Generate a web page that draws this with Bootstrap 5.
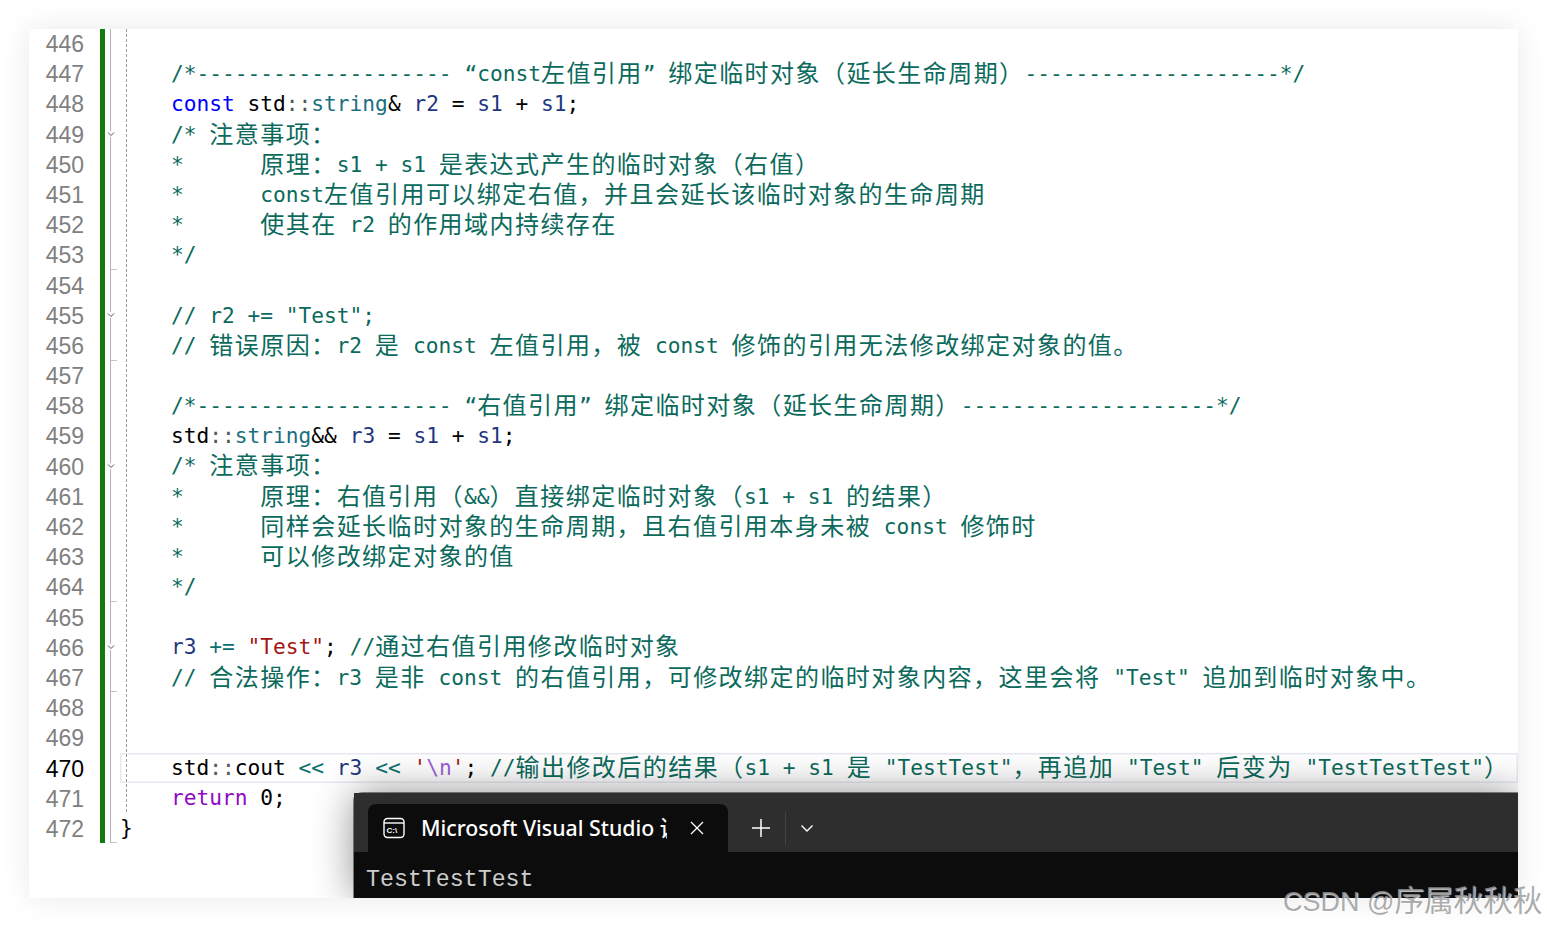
<!DOCTYPE html>
<html lang="zh">
<head>
<meta charset="utf-8">
<title>Code</title>
<link href="https://cdn.jsdelivr.net/npm/bootstrap@5.3.0/dist/css/bootstrap.min.css" rel="stylesheet">
<style>
body{background:#fff;overflow:hidden;height:928px}
.sheet{margin:29px 29px 0;height:869px;width:1489px;background:#fff;box-shadow:0 0 28px rgba(0,0,0,.09);position:relative;overflow:hidden}
.rowline{height:30.18px;line-height:30.18px;white-space:pre}
.nums{width:55px;text-align:right;font:23px/30.18px "Liberation Sans",sans-serif;color:#808080}
.nums .now{color:#000}
.gut{margin-left:16px;width:4.5px;background:#107c10;height:814px}
.fold{width:15.5px;height:814px}
.fm{height:30.15px;position:relative;border-left:1px solid #b4b4b4;margin-left:5px}
.fm svg{position:absolute;left:-4px;top:12px;background:#fff}
.fm.tick::after{content:"";position:absolute;left:0;bottom:0;width:6px;border-bottom:1px solid #c4c4c4}
.code{flex:1 1 auto;min-width:0;font-family:"DejaVu Sans Mono",monospace;font-size:21.2px;color:#000;position:relative}
.pad{padding-left:51px}
.now-line{box-shadow:inset 0 0 0 1.5px #e9e9f2}
.zh{font-family:"Noto Sans CJK SC",sans-serif;font-size:24px;letter-spacing:1.45px;line-height:0;vertical-align:-1px}
.cm{color:#0b6a5c}
.kw{color:#0000ff}
.ret{color:#8f08c4}
.va{color:#1f377f}
.ty{color:#1c6f80}
.op{color:#0a6f6f}
.st{color:#a31515}
.es{color:#9e5fd8}
.mu{color:#555}
.guide{position:absolute;left:6px;top:0;height:783px;border-left:1px dashed #9a9a9a}
.term{position:absolute;left:325px;top:764px;right:0;bottom:0;background:#0c0c0c;border-top-left-radius:8px;box-shadow:0 0 40px rgba(0,0,0,.45),0 0 0 1px #8f8f8f}
.tbar{height:59px;background:#2e2e2e;padding:11px 0 0 14px}
.ttab{width:360px;height:48px;background:#0c0c0c;border-radius:8px 8px 0 0;padding-left:15px;color:#fff}
.tname{width:246px;overflow:hidden;white-space:nowrap;font:500 21.3px/48px "Noto Sans","Noto Sans CJK SC",sans-serif;margin-left:16px}
.tsep{width:1px;height:33px;background:#444;margin:0 14px 0 14px}
.tout{padding:13px 0 0 12px;font:23.27px/30px "Liberation Mono",monospace;color:#ccc}
.wm{position:absolute;left:1283px;top:884px;font:27px/36px "Liberation Sans",sans-serif;color:rgba(150,150,150,.8);text-shadow:1px 1px 1px rgba(255,255,255,.8);white-space:nowrap}
.wmz{font-family:"Noto Sans CJK SC",sans-serif;font-size:29.6px;line-height:0}
</style>
</head>
<body>
<div class="sheet d-flex">
  <div class="nums">
    <div>446</div><div>447</div><div>448</div><div>449</div><div>450</div><div>451</div><div>452</div><div>453</div><div>454</div><div>455</div><div>456</div><div>457</div><div>458</div><div>459</div><div>460</div><div>461</div><div>462</div><div>463</div><div>464</div><div>465</div><div>466</div><div>467</div><div>468</div><div>469</div><div class="now">470</div><div>471</div><div>472</div>
  </div>
  <div class="gut"></div>
  <div class="fold">
    <div class="fm"></div><div class="fm"></div><div class="fm"></div>
    <div class="fm"><svg width="8" height="6" viewBox="0 0 8 6"><path d="M1 1.5 4 4.5 7 1.5" fill="none" stroke="#555" stroke-width="1"/></svg></div>
    <div class="fm"></div><div class="fm"></div><div class="fm"></div>
    <div class="fm tick"></div><div class="fm"></div>
    <div class="fm"><svg width="8" height="6" viewBox="0 0 8 6"><path d="M1 1.5 4 4.5 7 1.5" fill="none" stroke="#555" stroke-width="1"/></svg></div>
    <div class="fm tick"></div><div class="fm"></div><div class="fm"></div><div class="fm"></div>
    <div class="fm"><svg width="8" height="6" viewBox="0 0 8 6"><path d="M1 1.5 4 4.5 7 1.5" fill="none" stroke="#555" stroke-width="1"/></svg></div>
    <div class="fm"></div><div class="fm"></div><div class="fm"></div>
    <div class="fm tick"></div><div class="fm"></div>
    <div class="fm"><svg width="8" height="6" viewBox="0 0 8 6"><path d="M1 1.5 4 4.5 7 1.5" fill="none" stroke="#555" stroke-width="1"/></svg></div>
    <div class="fm tick"></div><div class="fm"></div><div class="fm"></div><div class="fm"></div><div class="fm"></div>
    <div class="fm tick"></div>
  </div>
  <div class="code">
    <div class="guide"></div>
    <div class="rowline pad"> </div>
    <div class="rowline pad cm">/*-------------------- “const<span class="zh">左值引用</span>” <span class="zh">绑定临时对象（延长生命周期）</span>--------------------*/</div>
    <div class="rowline pad"><span class="kw">const</span> std<span class="mu">::</span><span class="ty">string</span>&amp; <span class="va">r2</span> = <span class="va">s1</span> + <span class="va">s1</span>;</div>
    <div class="rowline pad cm">/* <span class="zh">注意事项：</span></div>
    <div class="rowline pad cm">*      <span class="zh">原理：</span>s1 + s1 <span class="zh">是表达式产生的临时对象（右值）</span></div>
    <div class="rowline pad cm">*      const<span class="zh">左值引用可以绑定右值，并且会延长该临时对象的生命周期</span></div>
    <div class="rowline pad cm">*      <span class="zh">使其在</span> r2 <span class="zh">的作用域内持续存在</span></div>
    <div class="rowline pad cm">*/</div>
    <div class="rowline pad"> </div>
    <div class="rowline pad cm">// r2 += "Test";</div>
    <div class="rowline pad cm">// <span class="zh">错误原因：</span>r2 <span class="zh">是</span> const <span class="zh">左值引用，被</span> const <span class="zh">修饰的引用无法修改绑定对象的值。</span></div>
    <div class="rowline pad"> </div>
    <div class="rowline pad cm">/*-------------------- “<span class="zh">右值引用</span>” <span class="zh">绑定临时对象（延长生命周期）</span>--------------------*/</div>
    <div class="rowline pad">std<span class="mu">::</span><span class="ty">string</span>&amp;&amp; <span class="va">r3</span> = <span class="va">s1</span> + <span class="va">s1</span>;</div>
    <div class="rowline pad cm">/* <span class="zh">注意事项：</span></div>
    <div class="rowline pad cm">*      <span class="zh">原理：右值引用（</span>&amp;&amp;<span class="zh">）直接绑定临时对象（</span>s1 + s1 <span class="zh">的结果）</span></div>
    <div class="rowline pad cm">*      <span class="zh">同样会延长临时对象的生命周期，且右值引用本身未被</span> const <span class="zh">修饰时</span></div>
    <div class="rowline pad cm">*      <span class="zh">可以修改绑定对象的值</span></div>
    <div class="rowline pad cm">*/</div>
    <div class="rowline pad"> </div>
    <div class="rowline pad"><span class="va">r3</span> <span class="op">+=</span> <span class="st">"Test"</span>; <span class="cm">//<span class="zh">通过右值引用修改临时对象</span></span></div>
    <div class="rowline pad cm">// <span class="zh">合法操作：</span>r3 <span class="zh">是非</span> const <span class="zh">的右值引用，可修改绑定的临时对象内容，这里会将</span> "Test" <span class="zh">追加到临时对象中。</span></div>
    <div class="rowline pad"> </div>
    <div class="rowline pad"> </div>
    <div class="rowline pad now-line">std<span class="mu">::</span>cout <span class="op">&lt;&lt;</span> <span class="va">r3</span> <span class="op">&lt;&lt;</span> <span class="st">'</span><span class="es">\n</span><span class="st">'</span>; <span class="cm">//<span class="zh">输出修改后的结果（</span>s1 + s1 <span class="zh">是</span> "TestTest"<span class="zh">，再追加</span> "Test" <span class="zh">后变为</span> "TestTestTest"<span class="zh">）</span></span></div>
    <div class="rowline pad"><span class="ret">return</span> 0;</div>
    <div class="rowline">}</div>
  </div>
  <div class="term">
    <div class="tbar d-flex align-items-start">
      <div class="ttab d-flex align-items-center">
        <svg width="22" height="22" viewBox="0 0 22 22" fill="none" stroke="#fff"><rect x="1" y="1.5" width="20" height="19" rx="3.5" stroke-width="1.4"/><path d="M1 6h20" stroke-width="1.4"/><text x="3.5" y="16" font-family="Liberation Sans" font-size="8" font-weight="700" fill="#fff" stroke="none">C:\</text></svg>
        <div class="tname">Microsoft Visual Studio 调试控制台</div>
        <svg class="ms-auto" style="margin-right:24px" width="14" height="14" viewBox="0 0 14 14"><path d="M1 1 13 13M13 1 1 13" stroke="#fff" stroke-width="1.3"/></svg>
      </div>
      <div class="d-flex align-items-center" style="height:48px">
        <svg style="margin-left:23px" width="20" height="20" viewBox="0 0 20 20"><path d="M10 1v18M1 10h18" stroke="#fff" stroke-width="1.5"/></svg>
        <div class="tsep"></div>
        <svg width="14" height="9" viewBox="0 0 14 9"><path d="M1.5 1.5 7 7 12.5 1.5" fill="none" stroke="#fff" stroke-width="1.4"/></svg>
      </div>
    </div>
    <div class="tout">TestTestTest</div>
  </div>
</div>
<div class="wm">CSDN @<span class="wmz">序属秋秋秋</span></div>
</body>
</html>
